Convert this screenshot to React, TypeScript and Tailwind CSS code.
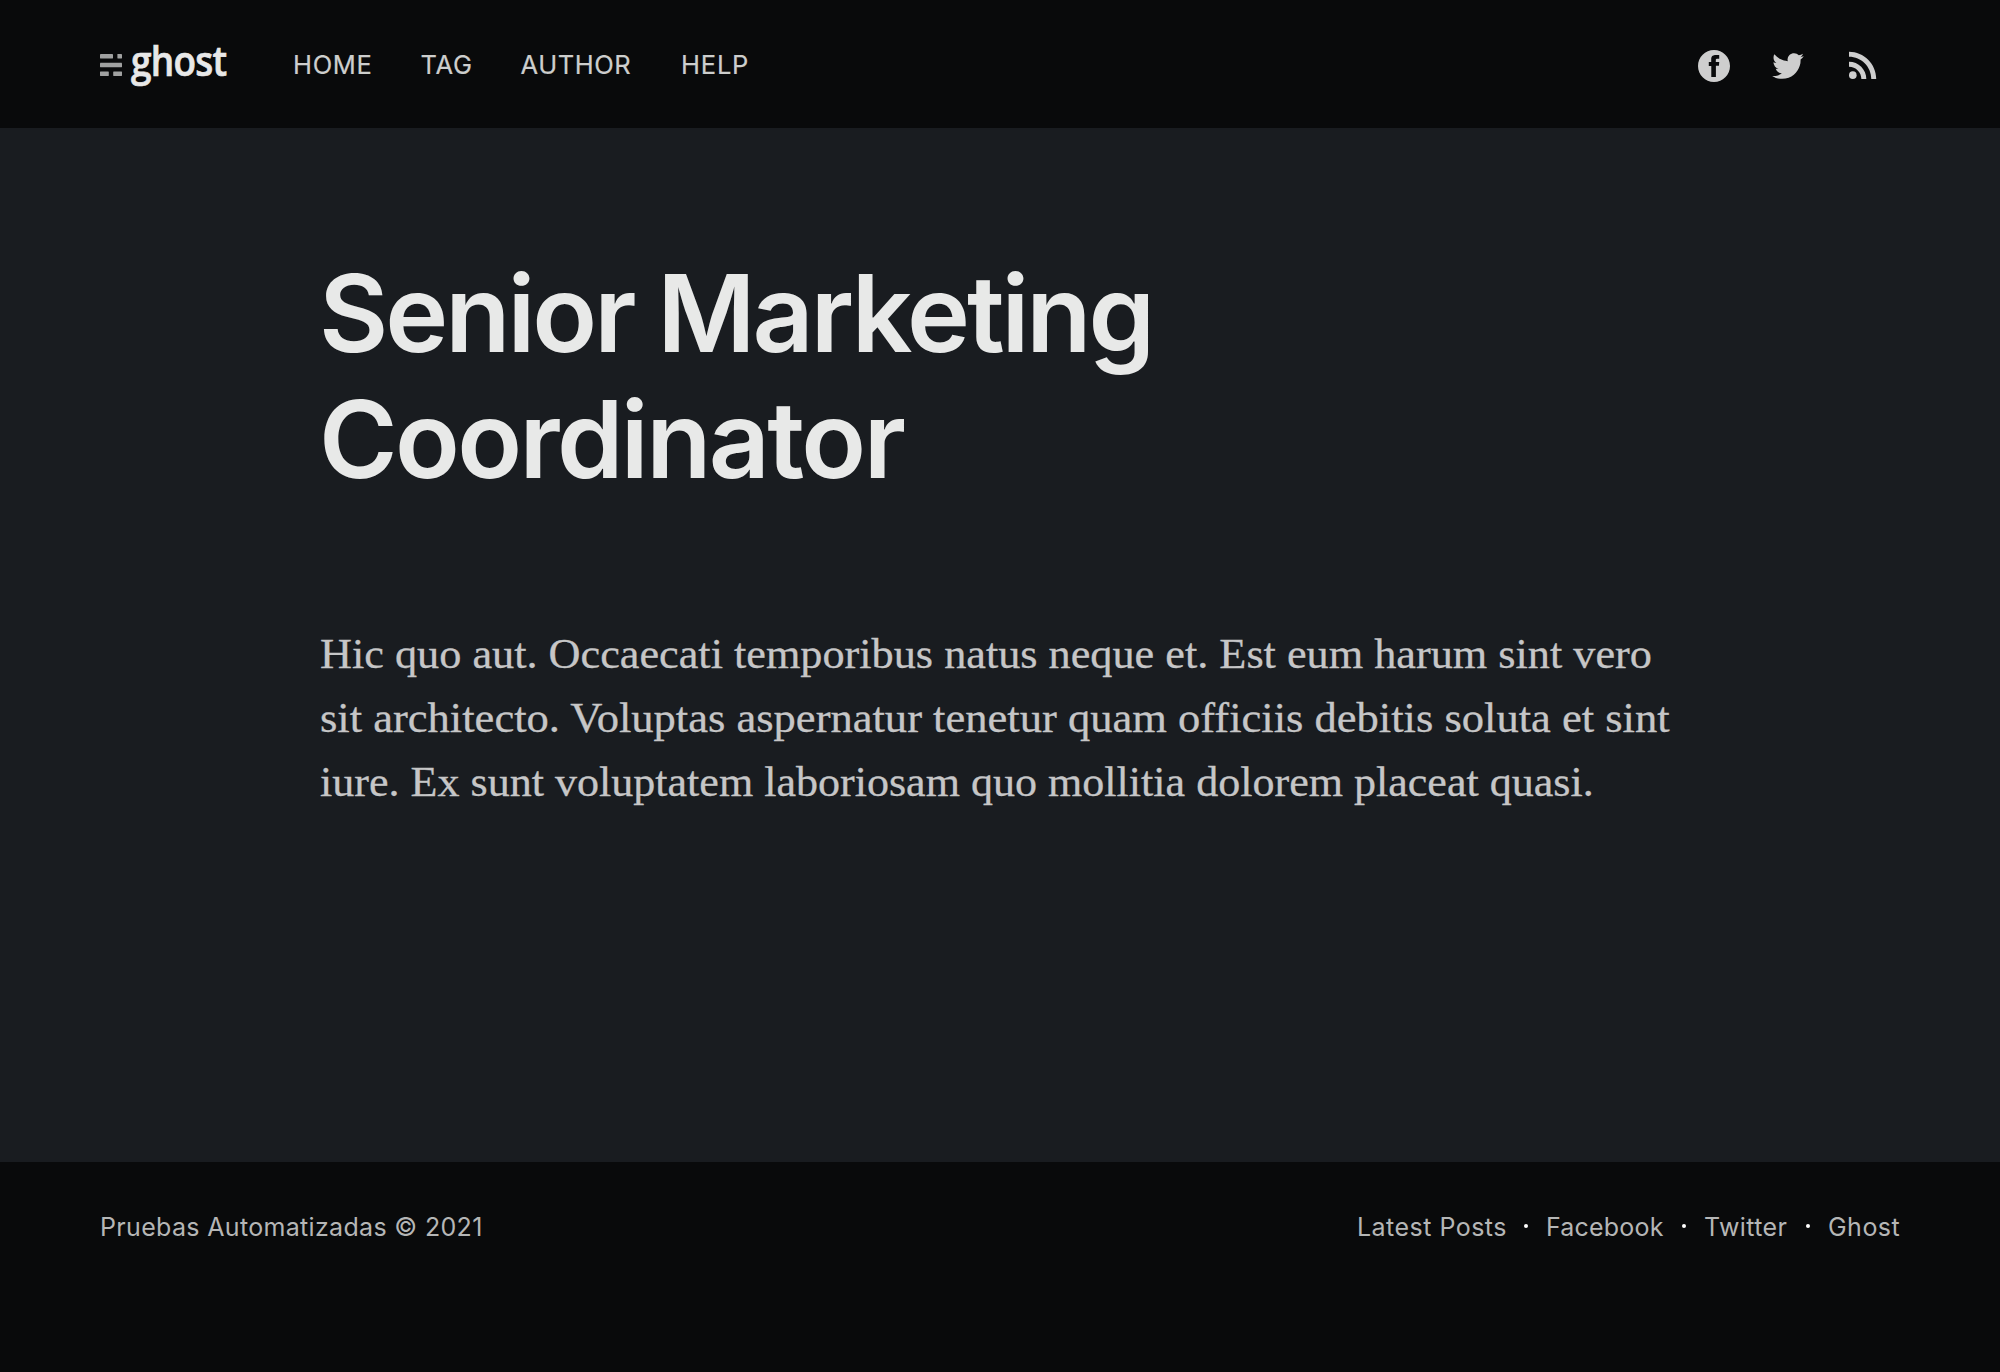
import React from "react";

const navItems = [
  { label: "HOME", className: "w-[127.5px] tracking-[0.7px]" },
  { label: "TAG", className: "w-[100px] tracking-[0.7px]" },
  { label: "AUTHOR", className: "w-[160.5px] tracking-[0.55px]" },
  { label: "HELP", className: "tracking-[0.8px]" },
];

const footerLinks = [
  { label: "Latest Posts", className: "w-[149px] tracking-[0.47px]" },
  { label: "Facebook", className: "w-[118px] tracking-[0.2px]" },
  { label: "Twitter", className: "w-[84px] tracking-[0.4px]" },
  { label: "Ghost", className: "w-[72px] tracking-[0.47px]" },
];

function Logo() {
  return (
    <a className="flex h-[60px] w-[193px] items-center">
      <svg className="mt-[2px] h-[22px] w-[22px] shrink-0 fill-[#a0a1a1]" viewBox="0 0 22 22">
        <rect x="0" y="0" width="13" height="4.4" rx="0.4" />
        <rect x="17.4" y="0" width="4.6" height="4.4" rx="0.4" />
        <rect x="0" y="8.8" width="22" height="4.4" rx="0.4" />
        <rect x="0" y="17.6" width="8.8" height="4.4" rx="0.4" />
        <rect x="13.2" y="17.6" width="8.8" height="4.4" rx="0.4" />
      </svg>
      <span className="mb-[9px] ml-[8.5px] origin-left scale-x-[0.9] font-['Open_Sans',sans-serif] text-[41px] leading-[56px] font-semibold tracking-[-0.8px] text-[#e8e8e8] [-webkit-text-stroke:0.7px_#e8e8e8]">
        ghost
      </span>
    </a>
  );
}

function FacebookIcon() {
  return (
    <svg className="size-8 fill-current" viewBox="0 0 32 32">
      <path d="M16 0c8.837 0 16 7.163 16 16s-7.163 16-16 16S0 24.837 0 16 7.163 0 16 0zm5.204 4.911h-3.546c-2.103 0-4.443.885-4.443 3.934.01 1.062 0 2.08 0 3.225h-2.433v3.872h2.509v11.147h4.61v-11.22h3.042l.275-3.81h-3.397s.007-1.695 0-2.187c0-1.205 1.253-1.136 1.329-1.136.596 0 1.756.001 2.054 0V4.911z" />
    </svg>
  );
}

function TwitterIcon() {
  return (
    <svg className="ml-10 size-9 fill-current" viewBox="0 0 32 32">
      <path d="M30.063 7.313c-.813 1.125-1.75 2.125-2.875 2.938v.75c0 1.563-.188 3.125-.688 4.625a15.088 15.088 0 0 1-2.063 4.438c-.875 1.438-2 2.688-3.25 3.813a15.015 15.015 0 0 1-4.625 2.563c-1.813.688-3.75 1-5.75 1-3.25 0-6.188-.875-8.875-2.625.438.063.875.125 1.375.125 2.688 0 5.063-.875 7.188-2.5-1.25 0-2.375-.375-3.375-1.125s-1.688-1.688-2.063-2.875c.438.063.813.125 1.125.125.5 0 1-.063 1.5-.25-1.313-.25-2.438-.938-3.313-1.938a5.673 5.673 0 0 1-1.313-3.688v-.063c.813.438 1.688.688 2.625.688a5.228 5.228 0 0 1-1.875-2c-.5-.875-.688-1.813-.688-2.75 0-1.063.25-2.063.75-2.938 1.438 1.75 3.188 3.188 5.25 4.25s4.313 1.688 6.688 1.813a5.579 5.579 0 0 1 1.5-5.438c1.125-1.125 2.5-1.688 4.125-1.688s3.063.625 4.188 1.813a11.48 11.48 0 0 0 3.688-1.375c-.438 1.375-1.313 2.438-2.563 3.188 1.125-.125 2.188-.438 3.313-.875z" />
    </svg>
  );
}

function RssIcon() {
  return (
    <svg className="mb-[2px] ml-9 size-[42px] fill-current" viewBox="0 0 24 24">
      <circle cx="6.18" cy="17.82" r="2.18" />
      <path d="M4 4.44v2.83c7.03 0 12.73 5.7 12.73 12.73h2.83c0-8.59-6.97-15.56-15.56-15.56zm0 5.66v2.83c3.9 0 7.07 3.17 7.07 7.07h2.83c0-5.47-4.43-9.9-9.9-9.9z" />
    </svg>
  );
}

export default function App() {
  return (
    <div className="flex h-[1372px] w-[2000px] flex-col bg-[#191c20] font-['Inter',sans-serif]">
      <header className="flex h-32 shrink-0 items-center bg-[#090a0b] pr-[116px] pl-[100px]">
        <Logo />
        <nav className="flex pt-[2px] text-[25.5px] leading-8 text-[#cdcecd] [-webkit-text-stroke:0.2px_#cdcecd]">
          {navItems.map((item) => (
            <a key={item.label} className={item.className}>
              {item.label}
            </a>
          ))}
        </nav>
        <div className="ml-auto flex items-center pt-1 text-[#cecece]">
          <FacebookIcon />
          <TwitterIcon />
          <RssIcon />
        </div>
      </header>

      <main className="flex-1 px-[320px] pt-[123px]">
        <h1 className="ml-[-1px] text-[106.6px] leading-[126px] font-semibold text-[#e8e9e8]">
          <span className="block tracking-[-3.04px]">Senior Marketing</span>
          <span className="block tracking-[-2.6px]">Coordinator</span>
        </h1>
        <p className="mt-[119px] font-['Liberation_Serif',serif] text-[42px] leading-[64px] whitespace-nowrap text-[#c6c6c7] [-webkit-text-stroke:0.3px_#c6c6c7]">
          <span className="block origin-left scale-x-[1.0535]">
            Hic quo aut. Occaecati temporibus natus neque et. Est eum harum sint vero
          </span>
          <span className="block origin-left scale-x-[1.0605]">
            sit architecto. Voluptas aspernatur tenetur quam officiis debitis soluta et sint
          </span>
          <span className="block origin-left scale-x-[1.049]">
            iure. Ex sunt voluptatem laboriosam quo mollitia dolorem placeat quasi.
          </span>
        </p>
      </main>

      <footer className="flex h-[210px] shrink-0 justify-between bg-[#090a0b] px-[100px] pt-[45px] text-[25px] leading-10 text-[#b5b6b6]">
        <span className="tracking-[0.33px]">Pruebas Automatizadas © 2021</span>
        <nav className="flex whitespace-nowrap">
          {footerLinks.map((link, i) => (
            <React.Fragment key={link.label}>
              {i > 0 && <i className="mt-[17px] mr-[18.5px] ml-[17.5px] size-1 rounded-full bg-white" />}
              <a className={link.className}>{link.label}</a>
            </React.Fragment>
          ))}
        </nav>
      </footer>
    </div>
  );
}
